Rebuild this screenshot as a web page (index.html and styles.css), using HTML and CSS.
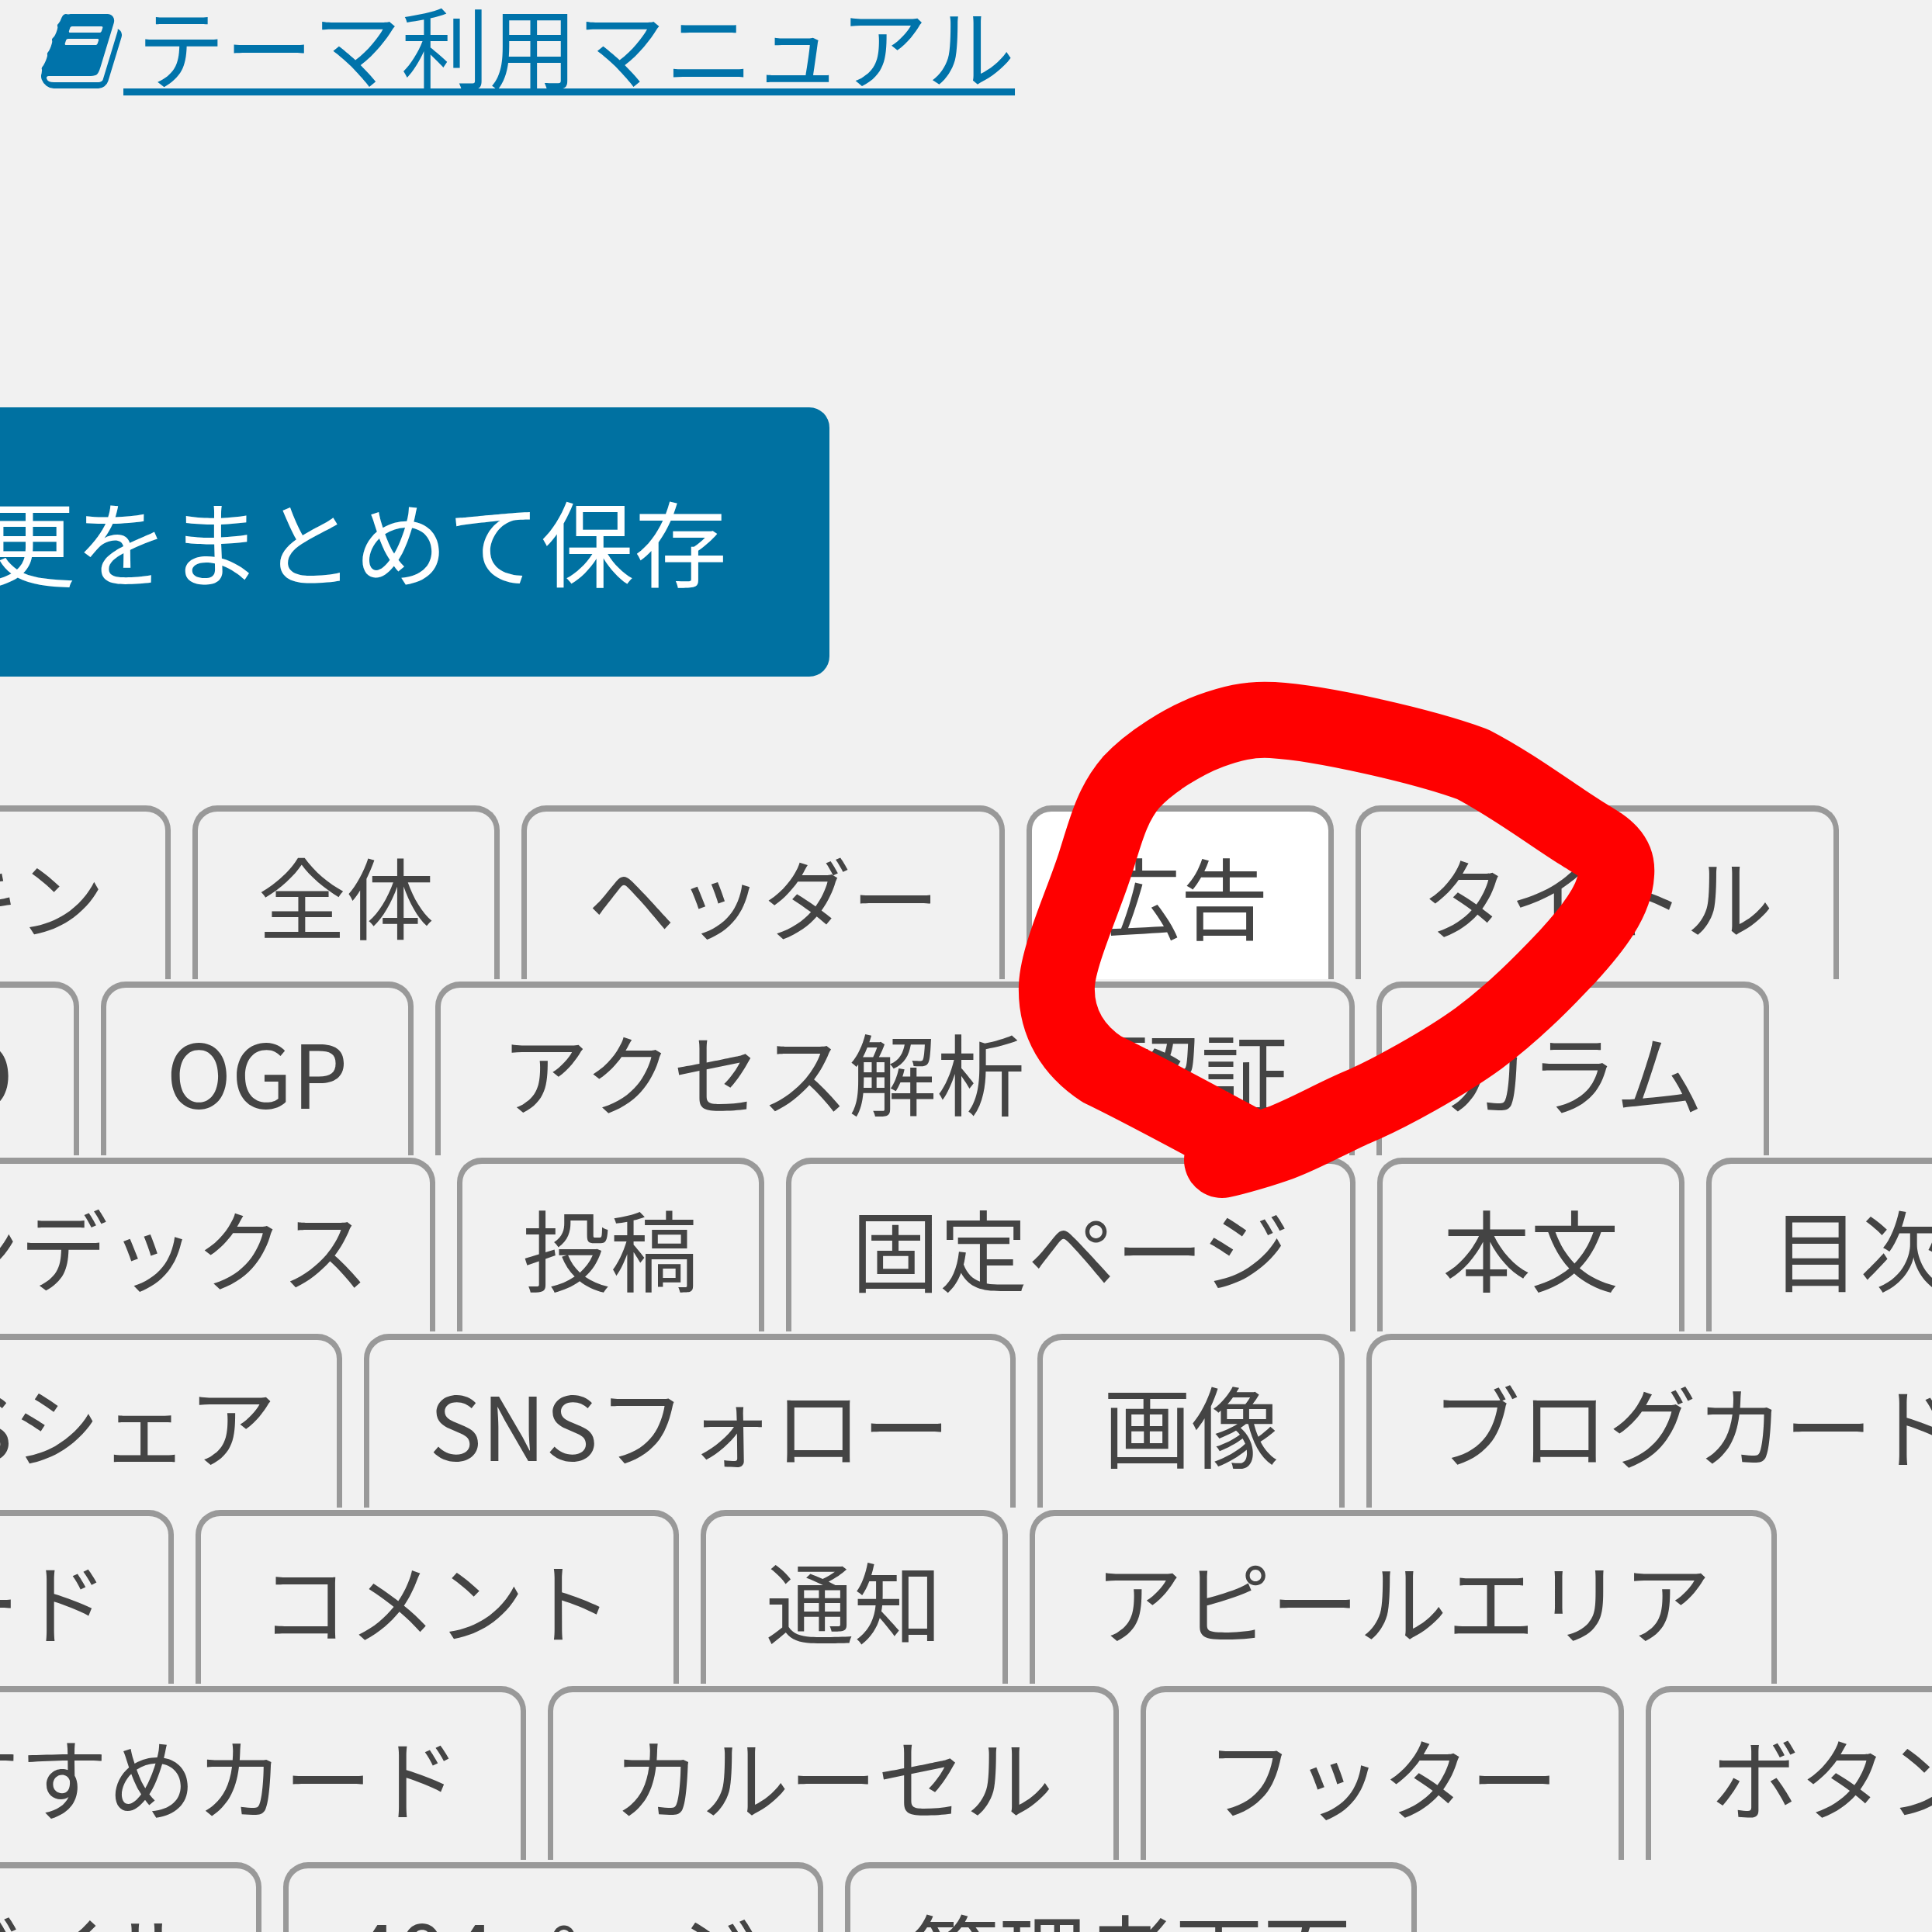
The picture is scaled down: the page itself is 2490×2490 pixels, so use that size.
FILE: index.html
```html
<!DOCTYPE html>
<html lang="ja">
<head>
  <meta charset="UTF-8" />
  <title>テーマ設定</title>
  <link rel="stylesheet" href="styles.css">
</head>
<body>
  <!-- MANUAL LINK -->
  <p class="manual">
    <a href="#"><svg class="book-icon" viewBox="0 0 1792 1792"><path d="M1639 478q40 57 18 129l-275 906q-19 64-76.5 107.5t-122.5 43.5h-923q-77 0-148.5-53.5t-99.5-131.5q-24-67-2-127 0-4 3-27t4-37q1-8-3-21.5t-3-19.5q2-11 8-21t16.5-23.5 16.5-23.5q23-38 45-91.5t30-91.5q3-10 .5-30t-.5-28q3-11 17-28t17-23q21-36 42-92t25-90q1-9-2.5-32t.5-28q4-13 22-30.5t22-22.5q19-26 42.5-84.5t27.5-96.5q1-8-3-25.5t-2-26.5q2-8 9-18t18-23 17-21q8-12 16.5-30.5t15-35 16-36 19.5-32 26.5-23.5 36-11.5 47.5 5.5l-1 3q38-9 51-9h761q74 0 114 56t18 130l-274 906q-36 119-71.5 153.5t-128.5 34.5h-869q-27 0-38 15-11 16-1 43 24 70 144 70h923q29 0 56-15.5t35-41.5l300-987q7-22 5-57 38 15 59 43zm-1064 2q-4 13 2 22.5t20 9.5h608q13 0 25.5-9.5t16.5-22.5l21-64q4-13-2-22.5t-20-9.5h-608q-13 0-25.5 9.5t-16.5 22.5zm-83 256q-4 13 2 22.5t20 9.5h608q13 0 25.5-9.5t16.5-22.5l21-64q4-13-2-22.5t-20-9.5h-608q-13 0-25.5 9.5t-16.5 22.5z"/></svg> テーマ利用マニュアル</a>
  </p>

  <!-- SAVE BUTTON -->
  <button class="save-button" type="button">変更をまとめて保存</button>

  <!-- SETTINGS TABS -->
  <div class="tabs">
    <a class="tab" href="#">スキン</a>
    <a class="tab" href="#">全体</a>
    <a class="tab" href="#">ヘッダー</a>
    <a class="tab active" href="#">広告</a>
    <a class="tab" href="#">タイトル</a>
    <a class="tab" href="#">SEO</a>
    <a class="tab" href="#">OGP</a>
    <a class="tab" href="#">アクセス解析・認証</a>
    <a class="tab" href="#">カラム</a>
    <a class="tab" href="#">インデックス</a>
    <a class="tab" href="#">投稿</a>
    <a class="tab" href="#">固定ページ</a>
    <a class="tab" href="#">本文</a>
    <a class="tab" href="#">目次</a>
    <a class="tab" href="#">SNSシェア</a>
    <a class="tab" href="#">SNSフォロー</a>
    <a class="tab" href="#">画像</a>
    <a class="tab" href="#">ブログカード</a>
    <a class="tab" href="#">コード</a>
    <a class="tab" href="#">コメント</a>
    <a class="tab" href="#">通知</a>
    <a class="tab" href="#">アピールエリア</a>
    <a class="tab" href="#">おすすめカード</a>
    <a class="tab" href="#">カルーセル</a>
    <a class="tab" href="#">フッター</a>
    <a class="tab" href="#">ボタン</a>
    <a class="tab" href="#">モバイル</a>
    <a class="tab" href="#">404ページ</a>
    <a class="tab" href="#">管理者画面</a>
  </div>

  <!-- Red marker loop drawn over the tabs -->
  <svg class="marker" viewBox="0 0 2490 2490">
    <path d="M1603 1474 C1540 1440 1470 1402 1420 1378 C1385 1355 1360 1320 1362 1270 C1364 1230 1397 1160 1412 1112 C1424 1075 1432 1038 1458 1008 C1482 982 1525 955 1560 942 C1585 933 1610 926 1640 928 C1706 932 1835 962 1898 985 C1950 1012 2000 1050 2037 1073 C2060 1088 2086 1098 2083 1127 C2081 1160 2055 1195 2020 1233 C1985 1270 1950 1305 1906 1338 C1862 1370 1790 1410 1747 1428 C1715 1442 1680 1462 1650 1473 C1625 1482 1590 1492 1575 1495"/>
  </svg>
</body>
</html>
```

FILE: styles.css
```css
html {
  overflow: hidden;
}
body {
  margin: 0;
  height: 100vh;
  overflow: hidden;
  position: relative;
  background-color: #f1f1f1;
  color: #444;
  font-family: "Noto Sans CJK JP", sans-serif;
  font-size: 113.5px;
}

.manual {
  margin: 0 0 0 53px;
  height: 525px;
  line-height: 114px;
}
.manual a {
  color: #0073aa;
  text-decoration: underline;
  text-decoration-thickness: 9px;
  text-underline-offset: 8px;
  word-spacing: -8px;
}
.book-icon {
  display: inline-block;
  width: 112px;
  height: 112px;
  margin-right: -6px;
  fill: currentColor;
  vertical-align: -16px;
}

.save-button {
  display: block;
  width: 1344px;
  height: 347px;
  margin: 0 0 166px -275px;
  padding: 0 132px 6px 0;
  background-color: #0071a1;
  border: none;
  border-radius: 26px;
  color: #fff;
  font-family: inherit;
  font-size: 120px;
  text-align: right;
}

.tabs {
  display: flex;
  flex-wrap: wrap;
  column-gap: 28px;
  row-gap: 3px;
  width: 2986px;
  margin-left: -286px;
}
.tab {
  box-sizing: border-box;
  display: flex;
  align-items: center;
  flex-shrink: 0;
  height: 224px;
  padding: 0 77.5px 3px;
  background-color: #f1f1f1;
  border: 8px solid #999;
  border-width: 8px 7px 0;
  border-radius: 32px 32px 0 0;
  color: #444;
  text-decoration: none;
  white-space: nowrap;
}
.tab.active {
  background-color: #fff;
}

.marker {
  position: absolute;
  top: 0;
  left: 0;
  width: 2490px;
  height: 2490px;
  fill: none;
  stroke: #f00;
  stroke-width: 98;
  stroke-linecap: round;
  stroke-linejoin: round;
  pointer-events: none;
}
```
